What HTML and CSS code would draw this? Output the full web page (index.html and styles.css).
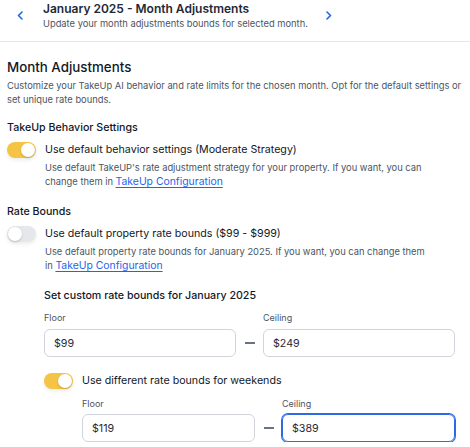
FILE: index.html
```html
<!DOCTYPE html>
<html>
<head>
<meta charset="utf-8">
<link rel="stylesheet" href="styles.css">
</head>
<body>
<header class="topbar">
  <button class="nav-btn prev" aria-label="Previous month">
    <svg width="6" height="9" viewBox="0 0 6 9"><path d="M5 1 L1.5 4.5 L5 8" fill="none" stroke="#2563eb" stroke-width="1.6" stroke-linecap="round" stroke-linejoin="round"/></svg>
  </button>
  <div class="title-block">
    <div class="title">January 2025 - Month Adjustments</div>
    <div class="subtitle">Update your month adjustments bounds for selected month.</div>
  </div>
  <button class="nav-btn next" aria-label="Next month">
    <svg width="6" height="9" viewBox="0 0 6 9"><path d="M1 1 L4.5 4.5 L1 8" fill="none" stroke="#2563eb" stroke-width="1.6" stroke-linecap="round" stroke-linejoin="round"/></svg>
  </button>
</header>

<main class="content">
  <h1 class="page-title">Month Adjustments</h1>
  <p class="page-desc">Customize your TakeUp AI behavior and rate limits for the chosen month. Opt for the default settings or set unique rate bounds.</p>

  <h2 class="section-title behavior-title">TakeUp Behavior Settings</h2>
  <div class="toggle-row">
    <span class="toggle on"><span class="knob"></span></span>
    <span class="toggle-label">Use default behavior settings (Moderate Strategy)</span>
  </div>
  <p class="option-desc">Use default TakeUP's rate adjustment strategy for your property. If you want, you can change them in <a class="link" href="#">TakeUp Configuration</a></p>

  <h2 class="section-title rate-title">Rate Bounds</h2>
  <div class="toggle-row">
    <span class="toggle"><span class="knob"></span></span>
    <span class="toggle-label">Use default property rate bounds ($99 - $999)</span>
  </div>
  <p class="option-desc">Use default property rate bounds for January 2025. If you want, you can change them in <a class="link" href="#">TakeUp Configuration</a></p>

  <section class="custom">
    <h3 class="custom-title">Set custom rate bounds for January 2025</h3>
    <div class="bounds">
      <label class="field-label">Floor</label>
      <span></span>
      <label class="field-label">Ceiling</label>
      <div class="input">$99</div>
      <span class="dash"></span>
      <div class="input">$249</div>
    </div>

    <div class="toggle-row weekend-row">
      <span class="toggle on"><span class="knob"></span></span>
      <span class="toggle-label">Use different rate bounds for weekends</span>
    </div>
    <div class="bounds weekend-bounds">
      <label class="field-label">Floor</label>
      <span></span>
      <label class="field-label">Ceiling</label>
      <div class="input">$119</div>
      <span class="dash"></span>
      <div class="input focused">$389</div>
    </div>
  </section>
</main>
</body>
</html>
```

FILE: styles.css
```css
* { box-sizing: border-box; }
html, body { margin: 0; padding: 0; background: #ffffff; }
body {
  font-family: Inter, "Noto Sans", sans-serif;
  color: #111827;
  width: 470px;
  overflow: hidden;
}

.topbar {
  display: flex;
  align-items: center;
  gap: 20px;
  padding: 0 0 10px 17px;
  border-bottom: 1px solid #e5e7eb;
  height: 42px;
}
.nav-btn {
  border: 0;
  background: none;
  padding: 0;
  width: 6px;
  height: 9px;
  display: flex;
}
.nav-btn.next { margin-left: -2px; }
.title-block { display: flex; flex-direction: column; }
.title {
  font-size: 12px;
  font-weight: 600;
  line-height: 17px;
  color: #1f2937;
}
.subtitle {
  font-size: 9.33px;
  line-height: 14px;
  color: #4b5563;
}

.content { padding: 0 7px 0 7px; }

.page-title {
  margin: 15px 0 0;
  font-size: 13.33px;
  font-weight: 500;
  line-height: 20px;
  color: #111827;
}
.page-desc {
  margin: 2px 0 0;
  font-size: 9.33px;
  line-height: 13.5px;
  color: #4b5563;
}

.section-title {
  margin: 0;
  font-size: 10.67px;
  font-weight: 500;
  line-height: 16px;
  color: #111827;
}
.behavior-title { margin-top: 14px; }
.rate-title { margin-top: 15px; }

.toggle-row {
  display: flex;
  align-items: center;
  gap: 9px;
  height: 18px;
  margin-top: 5px;
}
.toggle {
  position: relative;
  flex: none;
  width: 29px;
  height: 16px;
  border-radius: 8px;
  background: #e5e7eb;
  box-shadow: 0 2px 4px rgba(0, 0, 0, 0.08);
}
.toggle.on { background: #f6c445; }
.knob {
  position: absolute;
  top: 1px;
  left: 1px;
  width: 14px;
  height: 14px;
  border-radius: 50%;
  background: #ffffff;
  box-shadow: 0 1px 2px rgba(0, 0, 0, 0.2);
}
.toggle.on .knob { left: 14px; }
.toggle-label {
  font-size: 10.67px;
  line-height: 18px;
  color: #111827;
}

.option-desc {
  margin: 2px 0 0 38px;
  max-width: 384px;
  font-size: 9.33px;
  line-height: 14px;
  color: #4b5563;
}
.link {
  color: #2563eb;
  font-size: 10.4px;
  line-height: 14px;
  text-decoration: underline;
  text-underline-offset: 2px;
}

.custom { margin: 15px 8px 0 37px; }
.custom-title {
  margin: 0;
  font-size: 10.67px;
  font-weight: 500;
  line-height: 16px;
  color: #111827;
}
.bounds {
  display: grid;
  grid-template-columns: 1fr 10px 1fr;
  column-gap: 8.5px;
  row-gap: 4px;
  align-items: center;
  margin-top: 7px;
}
.field-label {
  font-size: 9px;
  line-height: 14px;
  color: #4b5563;
}
.input {
  height: 28px;
  border: 1px solid #d1d5db;
  border-radius: 6px;
  padding: 0 9px;
  display: flex;
  align-items: center;
  font-size: 10.67px;
  color: #1f2937;
}
.input.focused {
  border-color: #2f6ae6;
  box-shadow: 0 0 0 1px #2f6ae6;
}
.dash {
  display: block;
  width: 10px;
  height: 1.5px;
  background: #6b7280;
}
.weekend-row { margin-top: 15px; }
.weekend-bounds { margin: 7px 0 0 38px; row-gap: 3px; }
```
